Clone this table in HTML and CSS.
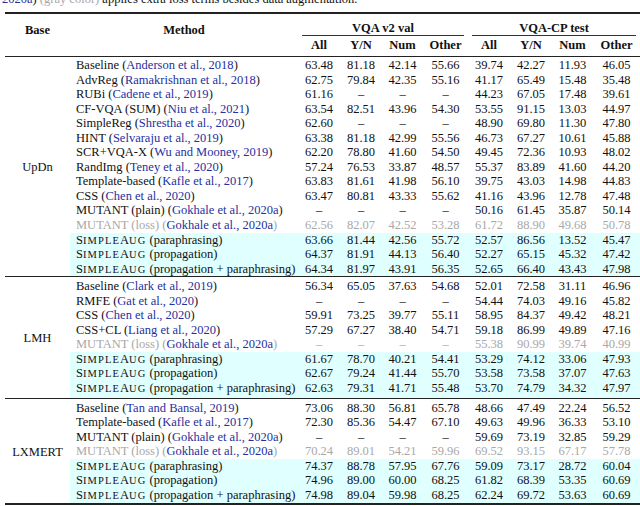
FILE: index.html
```html
<!DOCTYPE html>
<html>
<head>
<meta charset="utf-8">
<link rel="stylesheet" href="styles.css">
</head>
<body>
<div class="page">
  <p class="caption"><span class="cite">2020a</span>) <span class="gray">(gray color)</span> applies extra loss terms besides data augmentation.</p>
  <table class="results">
    <colgroup>
      <col class="c-base"><col class="c-method">
      <col class="c-n"><col class="c-n"><col class="c-n2"><col class="c-o">
      <col class="c-n"><col class="c-n"><col class="c-n2"><col class="c-o2">
    </colgroup>
    <thead>
      <tr class="h1">
        <th class="hbase" rowspan="2">Base</th>
        <th class="hmethod" rowspan="2">Method</th>
        <th class="hgroup" colspan="4"><div class="cmid">VQA v2 val</div></th>
        <th class="hgroup" colspan="4"><div class="cmid">VQA-CP test</div></th>
      </tr>
      <tr class="h2">
        <th>All</th><th>Y/N</th><th>Num</th><th>Other</th>
        <th>All</th><th>Y/N</th><th>Num</th><th>Other</th>
      </tr>
    </thead>
    <tbody class="g1">
      <tr class="first"><td class="base" rowspan="15">UpDn</td><td class="m">Baseline (<span class="cite">Anderson et al., 2018</span>)</td><td>63.48</td><td>81.18</td><td>42.14</td><td>55.66</td><td>39.74</td><td>42.27</td><td>11.93</td><td>46.05</td></tr>
      <tr><td class="m">AdvReg (<span class="cite">Ramakrishnan et al., 2018</span>)</td><td>62.75</td><td>79.84</td><td>42.35</td><td>55.16</td><td>41.17</td><td>65.49</td><td>15.48</td><td>35.48</td></tr>
      <tr><td class="m">RUBi (<span class="cite">Cadene et al., 2019</span>)</td><td>61.16</td><td>–</td><td>–</td><td>–</td><td>44.23</td><td>67.05</td><td>17.48</td><td>39.61</td></tr>
      <tr><td class="m">CF-VQA (SUM) (<span class="cite">Niu et al., 2021</span>)</td><td>63.54</td><td>82.51</td><td>43.96</td><td>54.30</td><td>53.55</td><td>91.15</td><td>13.03</td><td>44.97</td></tr>
      <tr><td class="m">SimpleReg (<span class="cite">Shrestha et al., 2020</span>)</td><td>62.60</td><td>–</td><td>–</td><td>–</td><td>48.90</td><td>69.80</td><td>11.30</td><td>47.80</td></tr>
      <tr><td class="m">HINT (<span class="cite">Selvaraju et al., 2019</span>)</td><td>63.38</td><td>81.18</td><td>42.99</td><td>55.56</td><td>46.73</td><td>67.27</td><td>10.61</td><td>45.88</td></tr>
      <tr><td class="m">SCR+VQA-X (<span class="cite">Wu and Mooney, 2019</span>)</td><td>62.20</td><td>78.80</td><td>41.60</td><td>54.50</td><td>49.45</td><td>72.36</td><td>10.93</td><td>48.02</td></tr>
      <tr><td class="m">RandImg (<span class="cite">Teney et al., 2020</span>)</td><td>57.24</td><td>76.53</td><td>33.87</td><td>48.57</td><td>55.37</td><td>83.89</td><td>41.60</td><td>44.20</td></tr>
      <tr><td class="m">Template-based (<span class="cite">Kafle et al., 2017</span>)</td><td>63.83</td><td>81.61</td><td>41.98</td><td>56.10</td><td>39.75</td><td>43.03</td><td>14.98</td><td>44.83</td></tr>
      <tr><td class="m">CSS (<span class="cite">Chen et al., 2020</span>)</td><td>63.47</td><td>80.81</td><td>43.33</td><td>55.62</td><td>41.16</td><td>43.96</td><td>12.78</td><td>47.48</td></tr>
      <tr><td class="m">MUTANT (plain) (<span class="cite">Gokhale et al., 2020a</span>)</td><td>–</td><td>–</td><td>–</td><td>–</td><td>50.16</td><td>61.45</td><td>35.87</td><td>50.14</td></tr>
      <tr class="gray"><td class="m">MUTANT (loss) (<span class="cite">Gokhale et al., 2020a</span>)</td><td>62.56</td><td>82.07</td><td>42.52</td><td>53.28</td><td>61.72</td><td>88.90</td><td>49.68</td><td>50.78</td></tr>
      <tr class="hl"><td class="m">S<span class="smc">IMPLE</span>A<span class="smc">UG</span> (paraphrasing)</td><td>63.66</td><td>81.44</td><td>42.56</td><td>55.72</td><td>52.57</td><td>86.56</td><td>13.52</td><td>45.47</td></tr>
      <tr class="hl"><td class="m">S<span class="smc">IMPLE</span>A<span class="smc">UG</span> (propagation)</td><td>64.37</td><td>81.91</td><td>44.13</td><td>56.40</td><td>52.27</td><td>65.15</td><td>45.32</td><td>47.42</td></tr>
      <tr class="hl last"><td class="m">S<span class="smc">IMPLE</span>A<span class="smc">UG</span> (propagation + paraphrasing)</td><td>64.34</td><td>81.97</td><td>43.91</td><td>56.35</td><td>52.65</td><td>66.40</td><td>43.43</td><td>47.98</td></tr>
    </tbody>
    <tbody class="g2">
      <tr class="first"><td class="base" rowspan="8">LMH</td><td class="m">Baseline (<span class="cite">Clark et al., 2019</span>)</td><td>56.34</td><td>65.05</td><td>37.63</td><td>54.68</td><td>52.01</td><td>72.58</td><td>31.11</td><td>46.96</td></tr>
      <tr><td class="m">RMFE (<span class="cite">Gat et al., 2020</span>)</td><td>–</td><td>–</td><td>–</td><td>–</td><td>54.44</td><td>74.03</td><td>49.16</td><td>45.82</td></tr>
      <tr><td class="m">CSS (<span class="cite">Chen et al., 2020</span>)</td><td>59.91</td><td>73.25</td><td>39.77</td><td>55.11</td><td>58.95</td><td>84.37</td><td>49.42</td><td>48.21</td></tr>
      <tr><td class="m">CSS+CL (<span class="cite">Liang et al., 2020</span>)</td><td>57.29</td><td>67.27</td><td>38.40</td><td>54.71</td><td>59.18</td><td>86.99</td><td>49.89</td><td>47.16</td></tr>
      <tr class="gray"><td class="m">MUTANT (loss) (<span class="cite">Gokhale et al., 2020a</span>)</td><td>–</td><td>–</td><td>–</td><td>–</td><td>55.38</td><td>90.99</td><td>39.74</td><td>40.99</td></tr>
      <tr class="hl"><td class="m">S<span class="smc">IMPLE</span>A<span class="smc">UG</span> (paraphrasing)</td><td>61.67</td><td>78.70</td><td>40.21</td><td>54.41</td><td>53.29</td><td>74.12</td><td>33.06</td><td>47.93</td></tr>
      <tr class="hl"><td class="m">S<span class="smc">IMPLE</span>A<span class="smc">UG</span> (propagation)</td><td>62.67</td><td>79.24</td><td>41.44</td><td>55.70</td><td>53.58</td><td>73.58</td><td>37.07</td><td>47.63</td></tr>
      <tr class="hl last"><td class="m">S<span class="smc">IMPLE</span>A<span class="smc">UG</span> (propagation + paraphrasing)</td><td>62.63</td><td>79.31</td><td>41.71</td><td>55.48</td><td>53.70</td><td>74.79</td><td>34.32</td><td>47.97</td></tr>
    </tbody>
    <tbody>
      <tr class="first"><td class="base" rowspan="7">LXMERT</td><td class="m">Baseline (<span class="cite">Tan and Bansal, 2019</span>)</td><td>73.06</td><td>88.30</td><td>56.81</td><td>65.78</td><td>48.66</td><td>47.49</td><td>22.24</td><td>56.52</td></tr>
      <tr><td class="m">Template-based (<span class="cite">Kafle et al., 2017</span>)</td><td>72.30</td><td>85.36</td><td>54.47</td><td>67.10</td><td>49.63</td><td>49.96</td><td>36.33</td><td>53.10</td></tr>
      <tr><td class="m">MUTANT (plain) (<span class="cite">Gokhale et al., 2020a</span>)</td><td>–</td><td>–</td><td>–</td><td>–</td><td>59.69</td><td>73.19</td><td>32.85</td><td>59.29</td></tr>
      <tr class="gray"><td class="m">MUTANT (loss) (<span class="cite">Gokhale et al., 2020a</span>)</td><td>70.24</td><td>89.01</td><td>54.21</td><td>59.96</td><td>69.52</td><td>93.15</td><td>67.17</td><td>57.78</td></tr>
      <tr class="hl"><td class="m">S<span class="smc">IMPLE</span>A<span class="smc">UG</span> (paraphrasing)</td><td>74.37</td><td>88.78</td><td>57.95</td><td>67.76</td><td>59.09</td><td>73.17</td><td>28.72</td><td>60.04</td></tr>
      <tr class="hl"><td class="m">S<span class="smc">IMPLE</span>A<span class="smc">UG</span> (propagation)</td><td>74.96</td><td>89.00</td><td>60.00</td><td>68.25</td><td>61.82</td><td>68.39</td><td>53.35</td><td>60.69</td></tr>
      <tr class="hl last"><td class="m">S<span class="smc">IMPLE</span>A<span class="smc">UG</span> (propagation + paraphrasing)</td><td>74.98</td><td>89.04</td><td>59.98</td><td>68.25</td><td>62.24</td><td>69.72</td><td>53.63</td><td>60.69</td></tr>
    </tbody>
  </table>
</div>
</body>
</html>
```

FILE: styles.css
```css
html, body {
  margin: 0;
  padding: 0;
  background: #ffffff;
}
body {
  font-family: "Liberation Serif", "Times New Roman", serif;
  font-size: 12.5px;
  color: #111111;
  overflow: hidden;
}
.page {
  width: 640px;
  height: 506px;
  overflow: hidden;
  padding-left: 5px;
  box-sizing: border-box;
}
.caption {
  margin: -8px 0 0 -3px;
  height: 14px;
  line-height: 14px;
  font-size: 12.5px;
  white-space: nowrap;
}
.cite { color: #2530a0; }
.gray { color: #a8a8a8; }
.results {
  margin-top: 6px;
  border-collapse: collapse;
  table-layout: fixed;
  width: 635px;
  border-top: 2px solid #222;
  border-bottom: 2px solid #222;
}
.c-base { width: 65px; }
.c-method { width: 228px; }
.c-n { width: 42px; }
.c-n2 { width: 41px; }
.c-o { width: 45px; }
.c-o2 { width: 47px; }
th, td {
  padding: 0;
  white-space: nowrap;
  text-align: center;
}
th { font-weight: bold; line-height: 14px; }
.hbase, .hmethod {
  vertical-align: top;
  padding-top: 9px;
}
.h1 .hgroup {
  padding-top: 7px;
  vertical-align: top;
}
.cmid {
  margin: 0 4px;
  border-bottom: 1px solid #333;
}
.h2 th {
  padding-top: 2px;
  padding-bottom: 4px;
}
tbody { border-top: 1px solid #222; }
td {
  height: 14.55px;
  line-height: 14.55px;
  vertical-align: middle;
}
tr.first td { padding-top: 2px; }
.g1 tr.first td { padding-top: 1px; }
tr.last td { padding-bottom: 1px; }
.g1 tr.last td { padding-bottom: 0; }
.g2 tr.last td { padding-bottom: 2px; }
td.base { vertical-align: middle; }
td.m {
  text-align: left;
  padding-left: 6px;
}
tr.gray td { color: #a8a8a8; }
tr.gray td .cite { color: #2530a0; }
tr.hl td { background: #e0ffff; }
.smc {
  font-size: 0.84em;
  line-height: 0;
  letter-spacing: 1.1px;
}
```
